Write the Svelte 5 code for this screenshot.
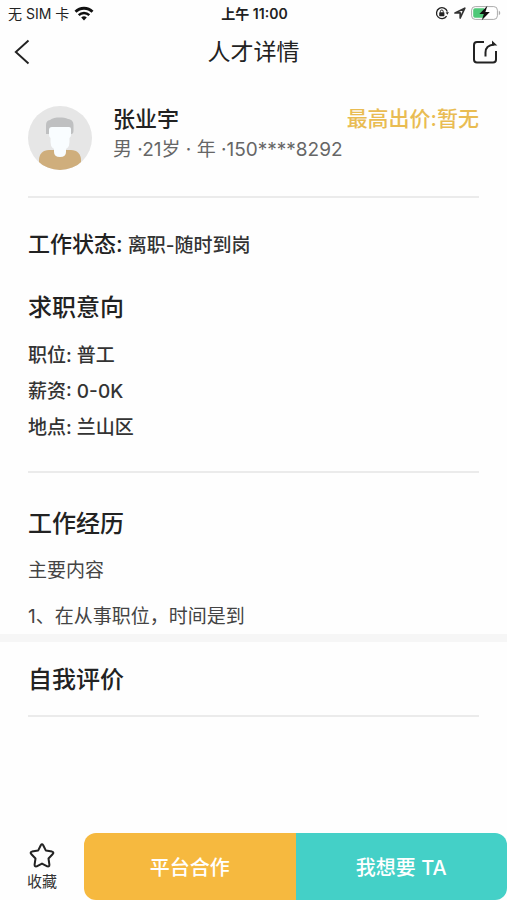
<script>
  let person = {
    name: '张业宇',
    info: '男 ·21岁 · 年 ·150****8292',
    price: '暂无',
    status: '离职-随时到岗',
  };

  let intention = [
    { label: '职位', value: '普工' },
    { label: '薪资', value: '0-0K' },
    { label: '地点', value: '兰山区' },
  ];

  let collected = false;

  const toggleCollect = () => (collected = !collected);
</script>

<div class="page">
  <div class="status-bar">
    <div class="carrier">
      <span>无 SIM 卡</span>
      <svg width="20" height="15" viewBox="0 0 20 15" fill="none">
        <path d="M1.5 5.8a12 12 0 0 1 17 0" stroke="#111" stroke-width="2.8" />
        <path d="M4.7 9.2a7.5 7.5 0 0 1 10.6 0" stroke="#111" stroke-width="2.4" />
        <path d="M10 14.4 7.2 11.6a4 4 0 0 1 5.6 0z" fill="#111" />
      </svg>
    </div>
    <div class="time">上午 11:00</div>
    <div class="indicators">
      <svg width="14" height="14" viewBox="0 0 14 14" fill="none">
        <path d="M11.6 10.2A5.5 5.5 0 1 1 12.3 5.6" stroke="#222" stroke-width="1.3" />
        <path d="m10.6 6.4 3.2-.4-1.3 2.8z" fill="#222" />
        <rect x="4.2" y="6.2" width="5.2" height="4" rx=".6" fill="#222" />
        <path d="M5.4 6.6V5.4a1.4 1.4 0 0 1 2.8 0v1.2" stroke="#222" />
      </svg>
      <svg width="12" height="12" viewBox="0 0 12 12" fill="none">
        <path
          d="M1 5.9 10.8 1.2 6.2 11V5.9z"
          stroke="#333"
          stroke-width="1.7"
          stroke-linejoin="round"
        />
      </svg>
      <svg width="30" height="16" viewBox="0 0 30 16">
        <rect x=".6" y="1.6" width="25.8" height="12.8" rx="3.6" fill="#fff" stroke="#aaa" />
        <path d="M4 3.2h9v9.6H4A1.8 1.8 0 0 1 2.2 11V5A1.8 1.8 0 0 1 4 3.2z" fill="#4fc878" />
        <path d="M27.8 5.8c1.9.7 1.9 3.7 0 4.4z" fill="#aaa" />
        <path d="M16.4.8 8.4 8.9h4.4L10.8 15.2l8-8.3h-4.4z" fill="#111" />
      </svg>
    </div>
  </div>

  <header class="nav">
    <button class="icon-btn" aria-label="返回">
      <svg width="16" height="26" viewBox="0 0 16 26" fill="none">
        <path d="M14.5 1.5 1.8 13l12.7 11.5" stroke="#222" stroke-width="1.9" />
      </svg>
    </button>
    <h1>人才详情</h1>
    <button class="icon-btn" aria-label="分享">
      <svg width="26" height="26" viewBox="0 0 26 26" fill="none" stroke="#222" stroke-width="2">
        <path d="M12 3H5A3 3 0 0 0 2 6V20.500A3 3 0 0 0 5 23.500H21A3 3 0 0 0 24 20.500V12" />
        <path d="M13.500 17.500V13.500C13.500 9 16.500 6 22 5.500" />
        <path d="M20 1.500 25.300 6.500H20z" fill="#222" stroke="none" />
      </svg>
    </button>
  </header>

  <main>
    <section class="profile">
      <svg class="avatar" viewBox="0 0 64 64">
        <clipPath id="round"><circle cx="32" cy="32" r="32" /></clipPath>
        <g clip-path="url(#round)">
          <rect width="64" height="64" fill="#e6e6e6" />
          <path d="M11 64V54c0-6 4-10 10-10h22c6 0 10 4 10 10v10z" fill="#cfae7c" />
          <path d="M26 40h12v6q0 5-6 5t-6-5z" fill="#f9fdff" />
          <path
            d="M18 28V19c0-3 1.500-4.500 4-5 2.500-2.200 6-2.500 9.500-2.500s6 .3 8.500 1.500c4 .5 5.500 3 5.500 6v6c0 2-1 3-2 3z"
            fill="#bfc0c1"
          />
          <path
            d="M24 21h17q2 0 2 2v6q0 2-1.500 3v4q0 8.500-9.500 8.500t-9.500-8.500v-4q-1.500-1-1.500-3v-5q0-3 3-3z"
            fill="#f9fdff"
          />
        </g>
      </svg>
      <div class="who">
        <div class="name-row">
          <h2>{person.name}</h2>
          <span class="price">最高出价:{person.price}</span>
        </div>
        <p>{person.info}</p>
      </div>
    </section>

    <section class="intention">
      <p class="work-status"><strong>工作状态:</strong> {person.status}</p>
      <h3>求职意向</h3>
      <ul>
        {#each intention as item}
          <li>{item.label}: {item.value}</li>
        {/each}
      </ul>
    </section>

    <section class="history">
      <h3>工作经历</h3>
      <p>主要内容</p>
      <p>1、在从事职位，时间是到</p>
    </section>

    <section class="review">
      <h3>自我评价</h3>
    </section>
  </main>

  <footer>
    <button class="collect" aria-pressed={collected} on:click={toggleCollect}>
      <svg width="28" height="28" viewBox="0 0 28 28">
        <path
          d="M12.8 3.2Q14 1.4 15.2 3.2L17.9 8.6 24 9.6Q26.2 10.2 24.8 12L20.500 16.500 21.400 22.700Q21.400 25 19.300 24.400L14 21.600 8.700 24.400Q6.600 25 6.600 22.700L7.500 16.500 3.200 12Q1.800 10.200 4 9.600L10.100 8.600Z"
          fill={collected ? '#f6b93f' : 'none'}
          stroke="#222"
          stroke-width="2"
          stroke-linejoin="round"
        />
      </svg>
      <span>收藏</span>
    </button>
    <div class="actions">
      <button class="cooperate">平台合作</button>
      <button class="want">我想要 TA</button>
    </div>
  </footer>
</div>

<style>
  :global(body) {
    margin: 0;
    background: #fefefe;
  }

  .page {
    display: flex;
    flex-direction: column;
    min-height: 100vh;
    color: #222;
    font-family: Inter, 'Noto Sans CJK SC', sans-serif;
  }

  h1,
  h2,
  h3,
  p,
  ul {
    margin: 0;
    padding: 0;
    font-weight: 500;
  }

  button {
    border: 0;
    padding: 0;
    background: none;
    color: inherit;
    font-family: inherit;
    cursor: pointer;
  }

  svg {
    display: block;
  }

  .status-bar {
    display: grid;
    grid-template-columns: 1fr auto 1fr;
    align-items: center;
    height: 26px;
    padding: 0 6px 0 8px;
    font-size: 14px;
  }

  .carrier,
  .indicators {
    display: flex;
    align-items: center;
    gap: 5px;
  }

  .indicators {
    justify-content: flex-end;
  }

  .time {
    font-weight: 600;
  }

  .nav {
    display: flex;
    align-items: center;
    justify-content: space-between;
    height: 52px;
    padding: 0 9px;
  }

  h1 {
    font-size: 23px;
    line-height: 32px;
    font-weight: 400;
  }

  .icon-btn {
    display: flex;
    justify-content: center;
    width: 26px;
  }

  .profile {
    display: flex;
    gap: 21px;
    margin: 0 28px;
    padding: 28px 0 26px;
    border-bottom: 2px solid #ebebeb;
  }

  .avatar {
    flex: none;
    width: 64px;
    height: 64px;
  }

  .who {
    flex: 1;
  }

  .name-row {
    display: flex;
    justify-content: space-between;
    line-height: 26px;
  }

  h2 {
    font-size: 22px;
  }

  .price {
    color: #e9bc52;
    font-size: 21px;
    font-weight: 500;
  }

  .who p {
    color: #666;
    font-size: 19px;
    font-weight: 400;
    line-height: 35px;
  }

  .intention {
    margin: 0 28px;
    padding: 30px 0 25px;
    border-bottom: 2px solid #ebebeb;
  }

  .work-status {
    font-size: 19px;
    line-height: 32px;
    color: #333;
  }

  .work-status strong {
    color: #222;
    font-size: 22px;
    font-weight: 500;
  }

  h3 {
    font-size: 24px;
    line-height: 36px;
  }

  .intention h3 {
    margin: 28px 0 12px;
  }

  li {
    color: #333;
    font-size: 19px;
    line-height: 36px;
    list-style: none;
  }

  .history {
    padding: 33px 28px 0;
    border-bottom: 8px solid #f6f6f6;
  }

  .history p {
    margin-top: 12px;
    color: #444;
    font-size: 19px;
    font-weight: 400;
    line-height: 34px;
  }

  .review {
    margin: 0 28px;
    padding: 20px 0 17px;
    border-bottom: 2px solid #ebebeb;
  }

  footer {
    display: flex;
    margin-top: auto;
  }

  .collect {
    display: flex;
    flex-direction: column;
    align-items: center;
    justify-content: center;
    width: 84px;
    color: #333;
    font-size: 15px;
  }

  .actions {
    display: flex;
    flex: 1;
    height: 67px;
    border-radius: 12px;
    overflow: hidden;
  }

  .actions button {
    flex: 1;
    color: #fff;
    font-size: 20px;
    font-weight: 500;
  }

  .cooperate {
    background: #f6b93f;
  }

  .want {
    background: #44d0c7;
  }
</style>
